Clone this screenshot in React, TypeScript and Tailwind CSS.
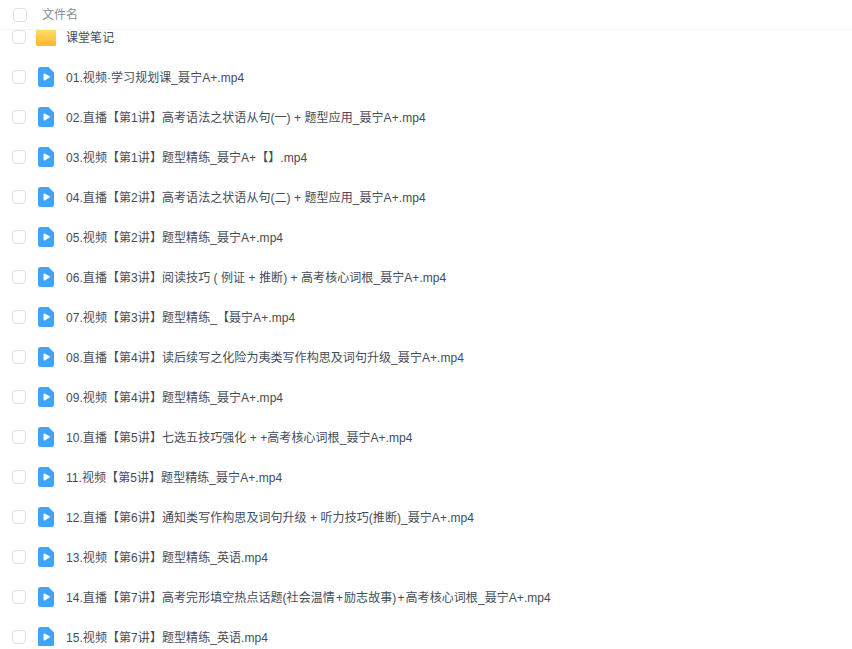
import React from 'react';

const files = [
  '01.视频·学习规划课_聂宁A+.mp4',
  '02.直播【第1讲】高考语法之状语从句(一) + 题型应用_聂宁A+.mp4',
  '03.视频【第1讲】题型精练_聂宁A+【】.mp4',
  '04.直播【第2讲】高考语法之状语从句(二) + 题型应用_聂宁A+.mp4',
  '05.视频【第2讲】题型精练_聂宁A+.mp4',
  '06.直播【第3讲】阅读技巧 ( 例证 + 推断) + 高考核心词根_聂宁A+.mp4',
  '07.视频【第3讲】题型精练_【聂宁A+.mp4',
  '08.直播【第4讲】读后续写之化险为夷类写作构思及词句升级_聂宁A+.mp4',
  '09.视频【第4讲】题型精练_聂宁A+.mp4',
  '10.直播【第5讲】七选五技巧强化 + +高考核心词根_聂宁A+.mp4',
  '11.视频【第5讲】题型精练_聂宁A+.mp4',
  '12.直播【第6讲】通知类写作构思及词句升级 + 听力技巧(推断)_聂宁A+.mp4',
  '13.视频【第6讲】题型精练_英语.mp4',
  '14.直播【第7讲】高考完形填空热点话题(社会温情\u200a+\u200a励志故事)\u200a+\u200a高考核心词根_聂宁A+.mp4',
  '15.视频【第7讲】题型精练_英语.mp4',
];

const Checkbox = () => (
  <span className="block h-[14px] w-[14px] shrink-0 rounded-[4px] border border-[#dcdfe3] bg-white" />
);

const FolderIcon = () => (
  <svg className="h-[18px] w-[20px]" viewBox="0 0 20 18" aria-hidden="true">
    <defs>
      <linearGradient id="folder" x1="0" y1="0" x2="0" y2="1">
        <stop offset="0" stopColor="#ffe06f" />
        <stop offset="1" stopColor="#fcb92b" />
      </linearGradient>
    </defs>
    <path d="M1.5 0h5.5l1.5 1.500h10A1.500 1.500 0 0 1 20 3v13.500a1.500 1.500 0 0 1-1.500 1.500h-17A1.500 1.500 0 0 1 0 16.500v-15A1.500 1.500 0 0 1 1.500 0z" fill="url(#folder)" />
  </svg>
);

const VideoIcon = () => (
  <svg className="h-[20px] w-[16px]" viewBox="0 0 16 20" aria-hidden="true">
    <path d="M2.500 0h8L16 5.500V17.500a2.500 2.500 0 0 1-2.500 2.500h-11A2.500 2.500 0 0 1 0 17.500v-15A2.500 2.500 0 0 1 2.500 0z" fill="#40a4fa" />
    <path d="M5.500 7.200c0-.6.600-1 1.100-.7l5 2.800c.5.300.5 1 0 1.300l-5 2.800c-.5.300-1.100-.1-1.100-.7z" fill="#fff" />
  </svg>
);

const Row = ({ name, folder }: { name: string; folder?: boolean }) => (
  <div className="flex h-[40px] shrink-0 items-center">
    <div className="flex w-[38px] justify-center"><Checkbox /></div>
    <div className="flex w-[16px] justify-center"><div className="flex shrink-0">{folder ? <FolderIcon /> : <VideoIcon />}</div></div>
    <span className="ml-[12px] translate-y-[1px] whitespace-nowrap text-[12px] tracking-[0.06px] text-[#454c59]">{name}</span>
  </div>
);

export default function App() {
  return (
    <div className="flex h-[646px] w-[852px] flex-col overflow-hidden bg-white font-['Liberation_Sans','Noto_Sans_CJK_SC',sans-serif]">
      <div className="relative z-10 flex h-[30px] shrink-0 items-center border-b border-[#f5f6f7] bg-white">
        <div className="flex w-[40px] justify-center"><Checkbox /></div>
        <span className="ml-[2px] text-[12px] text-[#888e99]">文件名</span>
      </div>
      <div className="-mt-[13px] flex flex-col">
        <Row name="课堂笔记" folder />
        {files.map((name) => <Row key={name} name={name} />)}
      </div>
    </div>
  );
}
